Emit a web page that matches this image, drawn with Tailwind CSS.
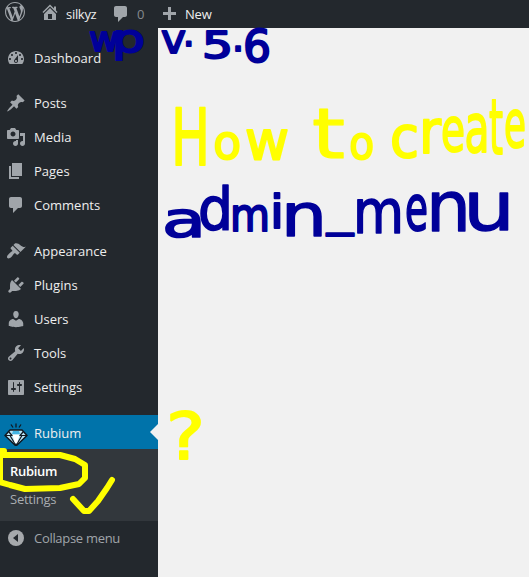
<!DOCTYPE html>
<html lang="en">
<head>
<meta charset="utf-8">
<title>silkyz admin</title>
<script src="https://cdn.jsdelivr.net/npm/@tailwindcss/browser@4"></script>
</head>
<body class="relative h-[577px] w-[529px] overflow-hidden bg-[#f1f1f1] font-['Open_Sans',sans-serif] text-[13px] leading-[18px] text-[#eeeeee]">
<header class="flex h-7 items-center bg-[#23282d] pb-1 pl-[5px]">
  <svg class="size-5 shrink-0 fill-[#a0a5aa]" viewBox="0 0 20 20"><path d="M20 10c0-5.51-4.49-10-10-10C4.48 0 0 4.49 0 10c0 5.52 4.48 10 10 10 5.51 0 10-4.48 10-10zM7.78 15.37L4.37 6.22c.55-.02 1.17-.08 1.17-.08.5-.06.44-1.13-.06-1.11 0 0-1.45.11-2.37.11-.18 0-.37 0-.58-.01C4.12 2.69 6.87 1.11 10 1.11c2.33 0 4.45.87 6.05 2.34-.68-.11-1.65.39-1.65 1.58 0 .74.45 1.36.9 2.1.35.61.55 1.36.55 2.46 0 1.49-1.4 5-1.4 5l-3.03-8.37c.54-.02.82-.17.82-.17.5-.05.44-1.25-.06-1.22 0 0-1.44.12-2.38.12-.87 0-2.33-.12-2.33-.12-.5-.03-.56 1.2-.06 1.22l.92.08 1.26 3.41zM17.41 10c.24-.64.74-1.87.43-4.25.7 1.29 1.05 2.71 1.05 4.25 0 3.29-1.73 6.24-4.4 7.78.97-2.59 1.94-5.2 2.92-7.78zM6.1 18.09C3.12 16.65 1.11 13.53 1.11 10c0-1.3.23-2.48.72-3.59C3.25 10.3 4.67 14.2 6.1 18.09zm4.03-6.63l2.58 6.98c-.86.29-1.76.45-2.71.45-.79 0-1.57-.11-2.29-.33.81-2.38 1.62-4.74 2.42-7.1z"/></svg>
  <svg class="ml-[15px] size-5 shrink-0 fill-[#a0a5aa]" viewBox="0 0 20 20"><path d="M16 8.5l1.53 1.53-1.06 1.06L10 4.6l-6.47 6.49-1.06-1.06L10 2.5l4 4v-2h2v4zm-6-2.46l6 5.99V18H4v-5.97zM12 17v-5H8v5h4z"/></svg>
  <span class="ml-1.5 mt-[3px] w-[45px] tracking-[-0.3px]">silkyz</span>
  <svg class="mt-[3px] size-5 shrink-0 fill-[#a0a5aa]" viewBox="0 0 20 20"><path d="M5 2h9c1.1 0 2 .9 2 2v7c0 1.1-.9 2-2 2h-2l-5 5v-5H5c-1.1 0-2-.9-2-2V4c0-1.1.9-2 2-2z"/></svg>
  <span class="ml-1.5 mt-[3px] w-[26px] text-[#858a8f]">0</span>
  <svg class="mt-[2px] size-[13px] shrink-0 fill-[#a0a5aa]" viewBox="0 0 13 13"><path d="M5 0h3v5h5v3H8v5H5V8H0V5h5z"/></svg>
  <span class="ml-[9px] mt-[3px] tracking-[-0.2px]">New</span>
</header>

<nav class="flex h-[549px] w-[158px] flex-col bg-[#23282d] pt-[13px]">
  <div class="flex h-[34px] items-center gap-2 pl-1.5"><svg class="size-5 fill-[#a0a5aa]" viewBox="0 0 20 20"><path d="M3.76 16h12.48c1.1-1.37 1.76-3.11 1.76-5 0-4.42-3.58-8-8-8s-8 3.58-8 8c0 1.89.66 3.63 1.76 5zM10 4c.55 0 1 .45 1 1s-.45 1-1 1-1-.45-1-1 .45-1 1-1zM6 6c.55 0 1 .45 1 1s-.45 1-1 1-1-.45-1-1 .45-1 1-1zm8 0c.55 0 1 .45 1 1s-.45 1-1 1-1-.45-1-1 .45-1 1-1zm-5.37 5.55L12 7v6c0 1.1-.9 2-2 2s-2-.9-2-2c0-.57.24-1.08.63-1.45zM4 10c.55 0 1 .45 1 1s-.45 1-1 1-1-.45-1-1 .45-1 1-1zm12 0c.55 0 1 .45 1 1s-.45 1-1 1-1-.45-1-1 .45-1 1-1zm-5 3c0-.55-.45-1-1-1s-1 .45-1 1 .45 1 1 1 1-.45 1-1z"/></svg>Dashboard</div>

  <div class="mt-[11px] flex h-[34px] items-center gap-2 pl-1.5"><svg class="size-5 fill-[#a0a5aa]" viewBox="0 0 20 20"><path d="M10.44 3.02l1.82-1.82 6.36 6.35-1.83 1.82c-1.05-.68-2.48-.57-3.41.36l-.75.75c-.92.93-1.04 2.35-.35 3.41l-1.83 1.82-2.41-2.41-2.8 2.79c-.42.42-3.38 2.71-3.8 2.29s1.86-3.39 2.28-3.81l2.79-2.79L4.1 9.36l1.83-1.82c1.05.69 2.48.57 3.4-.36l.75-.75c.93-.92 1.05-2.35.36-3.41z"/></svg>Posts</div>
  <div class="flex h-[34px] items-center gap-2 pl-1.5"><svg class="size-5 fill-[#a0a5aa]" viewBox="0 0 20 20"><path d="M13 11V4c0-.55-.45-1-1-1h-1.67L9 1H5L3.67 3H2c-.55 0-1 .45-1 1v7c0 .55.45 1 1 1h10c.55 0 1-.45 1-1zM7 4.5c1.38 0 2.5 1.12 2.5 2.5S8.38 9.5 7 9.5 4.5 8.38 4.5 7 5.62 4.5 7 4.5zM14 6h5v10.5c0 1.38-1.12 2.5-2.5 2.5S14 17.88 14 16.5s1.12-2.5 2.5-2.5c.17 0 .34.02.5.05V9h-3V6zm-4 8.05V13h2v3.5c0 1.38-1.12 2.5-2.5 2.5S7 17.88 7 16.5 8.12 14 9.5 14c.17 0 .34.02.5.05z"/></svg>Media</div>
  <div class="flex h-[34px] items-center gap-2 pl-1.5"><svg class="size-5 fill-[#a0a5aa]" viewBox="0 0 20 20"><path d="M6 15V2h10v13H6zm-1 1h8v2H3V5h2v11z"/></svg>Pages</div>
  <div class="flex h-[34px] items-center gap-2 pl-1.5"><svg class="size-5 fill-[#a0a5aa]" viewBox="0 0 20 20"><path d="M5 2h9c1.1 0 2 .9 2 2v7c0 1.1-.9 2-2 2h-2l-5 5v-5H5c-1.1 0-2-.9-2-2V4c0-1.1.9-2 2-2z"/></svg>Comments</div>

  <div class="mt-3 flex h-[34px] items-center gap-2 pl-1.5"><svg class="size-5 fill-[#a0a5aa]" viewBox="0 0 20 20"><path d="M14.48 11.06L7.41 3.99l1.5-1.5c.5-.56 2.3-.47 3.51.32 1.21.8 1.43 1.28 2.91 2.1 1.18.64 2.45 1.26 4.45.85zm-.71.71L6.7 4.7 4.93 6.47c-.39.39-.39 1.02 0 1.41l1.06 1.06c.39.39.39 1.03 0 1.42-.6.6-1.43 1.11-2.21 1.69-.35.26-.7.53-1.01.84C1.43 14.23.4 16.08 1.4 17.07c.99 1 2.84-.03 4.18-1.36.31-.31.58-.66.85-1.02.57-.78 1.08-1.61 1.69-2.21.39-.39 1.02-.39 1.41 0l1.06 1.06c.39.39 1.02.39 1.41 0z"/></svg>Appearance</div>
  <div class="flex h-[34px] items-center gap-2 pl-1.5"><svg class="size-5 fill-[#a0a5aa]" viewBox="0 0 20 20"><path d="M13.11 4.36L9.87 7.6 8 5.73l3.24-3.24c.35-.34 1.05-.2 1.56.32.52.51.66 1.21.31 1.55zm-8 1.77l.91-1.12 9.01 9.01-1.19.84c-.71.71-2.63 1.16-3.82 1.16H6.14L4.9 17.26c-.59.59-1.54.59-2.12 0-.59-.58-.59-1.53 0-2.12l1.24-1.24v-3.88c0-1.13.4-3.19 1.09-3.89zm7.26 3.97l3.24-3.24c.34-.35 1.04-.21 1.55.31.52.51.66 1.21.31 1.55l-3.24 3.25z"/></svg>Plugins</div>
  <div class="flex h-[34px] items-center gap-2 pl-1.5"><svg class="size-5 fill-[#a0a5aa]" viewBox="0 0 20 20"><path d="M10 9.25c-2.27 0-2.73-3.44-2.73-3.44C7 4.02 7.82 2 9.97 2c2.16 0 2.98 2.02 2.71 3.81 0 0-.41 3.44-2.68 3.44zm0 2.57L12.72 10c2.39 0 4.52 2.33 4.52 4.53v2.49s-3.65 1.13-7.24 1.13c-3.65 0-7.24-1.13-7.24-1.13v-2.49c0-2.25 1.94-4.48 4.47-4.48z"/></svg>Users</div>
  <div class="flex h-[34px] items-center gap-2 pl-1.5"><svg class="size-5 fill-[#a0a5aa]" viewBox="0 0 20 20"><path d="M16.68 9.77c-1.34 1.34-3.3 1.67-4.95.99l-5.41 6.52c-.99.99-2.59.99-3.58 0s-.99-2.59 0-3.57l6.52-5.42c-.68-1.65-.35-3.61.99-4.95 1.28-1.28 3.12-1.62 4.72-1.06l-2.89 2.89 2.82 2.82 2.86-2.87c.53 1.58.18 3.39-1.08 4.65zM3.81 16.21c.4.39 1.04.39 1.43 0 .4-.4.4-1.04 0-1.43-.39-.4-1.03-.4-1.43 0-.39.39-.39 1.03 0 1.43z"/></svg>Tools</div>
  <div class="flex h-[34px] items-center gap-2 pl-1.5"><svg class="size-5 fill-[#a0a5aa]" viewBox="0 0 20 20"><path fill-rule="evenodd" d="M18 16V4c0-.55-.45-1-1-1H3c-.55 0-1 .45-1 1v13c0 .55.45 1 1 1h14c.55 0 1-.45 1-1zM8 11h1c.55 0 1 .45 1 1s-.45 1-1 1H8v1.5c0 .28-.22.5-.5.5s-.5-.22-.5-.5V13H6c-.55 0-1-.45-1-1s.45-1 1-1h1V5.500c0-.28.22-.5.5-.5s.5.22.5.5V11zm5-2h-1c-.55 0-1-.45-1-1s.45-1 1-1h1V5.500c0-.28.22-.5.5-.5s.5.22.5.5V7h1c.55 0 1 .45 1 1s-.45 1-1 1h-1v5.500c0 .28-.22.5-.5.5s-.5-.22-.5-.5V9z"/></svg>Settings</div>

  <div class="relative mt-[11px] flex h-[34px] items-center gap-1.5 bg-[#0073aa] pl-1">
    <svg class="mt-1 h-6 w-6" viewBox="0 0 24 24"><path d="M6 8h12l5 5.500-11 10.500L1 13.500z" fill="#b9e6f8" stroke="#101820" stroke-width="1.5" stroke-linejoin="round"/><path d="M9 9h6l1 3H8z" fill="#42b4e3"/><path d="M5 10l3 3.500M19 10l-3 3.500M2 13.500h20M6 13.500l6 10 6-10" fill="none" stroke="#101820" stroke-width="1.200"/><path d="M8.500 13h7l-2.500 8h-2z" fill="#fff"/><path d="M12 1.500v4M7 2.500l2 3M17 2.500l-2 3" stroke="#101820" stroke-width="1.300"/></svg>
    <span class="mt-0.5">Rubium</span>
    <svg class="absolute right-0 top-[9px] h-4 w-2 fill-[#f1f1f1]" viewBox="0 0 8 16"><path d="M8 0v16L0 8z"/></svg>
  </div>
  <div class="flex h-[72px] flex-col bg-[#32373c] pl-2.5 pt-[13px]">
    <span class="h-7 font-semibold tracking-[-0.3px] text-white">Rubium</span>
    <span class="tracking-[-0.25px] text-[#a9adb1]">Settings</span>
  </div>
  <div class="flex h-[34px] items-center gap-2 pl-1.5 tracking-[-0.3px] text-[#a0a5aa]"><svg class="size-5" viewBox="0 0 20 20"><circle cx="10" cy="10" r="8" fill="#a6a9ac"/><path d="M12 6v8l-5-4z" fill="#23282d"/></svg>Collapse menu</div>
</nav>

<!-- Marker annotations -->
<svg class="absolute left-0 top-0 h-[577px] w-[529px] font-['DejaVu_Sans',sans-serif]" viewBox="0 0 529 577" stroke-linejoin="round" stroke-linecap="round">
  <g fill="#000099" stroke="#000099" stroke-width="2">
    <text><tspan x="89" y="51" font-size="33" textLength="30" lengthAdjust="spacingAndGlyphs">w</tspan><tspan x="112" y="52" font-size="39" textLength="33" lengthAdjust="spacingAndGlyphs">p</tspan></text>
    <text><tspan x="161" y="53" font-size="41" textLength="25" lengthAdjust="spacingAndGlyphs">v</tspan><tspan x="183" y="46" font-size="36">.</tspan><tspan x="202" y="58" font-size="37" textLength="31" lengthAdjust="spacingAndGlyphs">5</tspan><tspan x="232" y="51" font-size="38">.</tspan><tspan x="243" y="62" font-size="44" textLength="28" lengthAdjust="spacingAndGlyphs">6</tspan></text>
    <text><tspan x="162" y="237" font-size="50" textLength="44" lengthAdjust="spacingAndGlyphs" stroke-width="1.7">a</tspan><tspan x="198" y="230" font-size="58" textLength="35" lengthAdjust="spacingAndGlyphs" stroke-width="1.7">d</tspan><tspan x="230" y="231" font-size="46" textLength="40" lengthAdjust="spacingAndGlyphs">m</tspan><tspan x="270" y="228" font-size="46" textLength="14" lengthAdjust="spacingAndGlyphs">i</tspan><tspan x="281" y="236" font-size="58" textLength="46" lengthAdjust="spacingAndGlyphs" stroke-width="1.500">n</tspan><tspan x="327" y="226" font-size="40" textLength="26" lengthAdjust="spacingAndGlyphs">_</tspan><tspan x="353" y="233" font-size="60" textLength="51" lengthAdjust="spacingAndGlyphs" stroke-width="1.500">m</tspan><tspan x="405" y="230" font-size="62" textLength="23" lengthAdjust="spacingAndGlyphs">e</tspan><tspan x="426" y="231" font-size="70" textLength="45" lengthAdjust="spacingAndGlyphs" stroke-width="1.300">n</tspan><tspan x="463" y="230" font-size="68" textLength="52" lengthAdjust="spacingAndGlyphs" stroke-width="1.300">u</tspan></text>
  </g>
  <g fill="#ffff00" stroke="#ffff00" stroke-width="2">
    <text><tspan x="171" y="165" font-size="78" textLength="39" lengthAdjust="spacingAndGlyphs">H</tspan><tspan x="213.500" y="159" font-size="48" textLength="28" lengthAdjust="spacingAndGlyphs">o</tspan><tspan x="245" y="159" font-size="53" textLength="44" lengthAdjust="spacingAndGlyphs">w</tspan></text>
    <text><tspan x="312" y="158" font-size="70" textLength="33" lengthAdjust="spacingAndGlyphs" stroke-width="1.200">t</tspan><tspan x="349.500" y="159" font-size="46" textLength="25" lengthAdjust="spacingAndGlyphs">o</tspan></text>
    <text><tspan x="390" y="157" font-size="57" textLength="29" lengthAdjust="spacingAndGlyphs">c</tspan><tspan x="419" y="153" font-size="61" textLength="22" lengthAdjust="spacingAndGlyphs">r</tspan><tspan x="441" y="151" font-size="60" textLength="24" lengthAdjust="spacingAndGlyphs">e</tspan><tspan x="464.500" y="152" font-size="67" textLength="25" lengthAdjust="spacingAndGlyphs">a</tspan><tspan x="489" y="154" font-size="76" textLength="14" lengthAdjust="spacingAndGlyphs">t</tspan><tspan x="504" y="147" font-size="65" textLength="22" lengthAdjust="spacingAndGlyphs">e</tspan></text>
    <text><tspan x="166" y="459" font-size="64" textLength="39" lengthAdjust="spacingAndGlyphs" stroke-width="1.8">?</tspan></text>
  </g>
  <g fill="none" stroke="#ffff00" stroke-width="6">
    <path d="M0 451h4M0 456v26M4 455H60L75 459L85 465V478L79 484L60 488L25 489L10 485L0 482"/>
    <path d="M73 499L84 511H89L98 501L107 488L112 480"/>
  </g>
</svg>
</body>
</html>
